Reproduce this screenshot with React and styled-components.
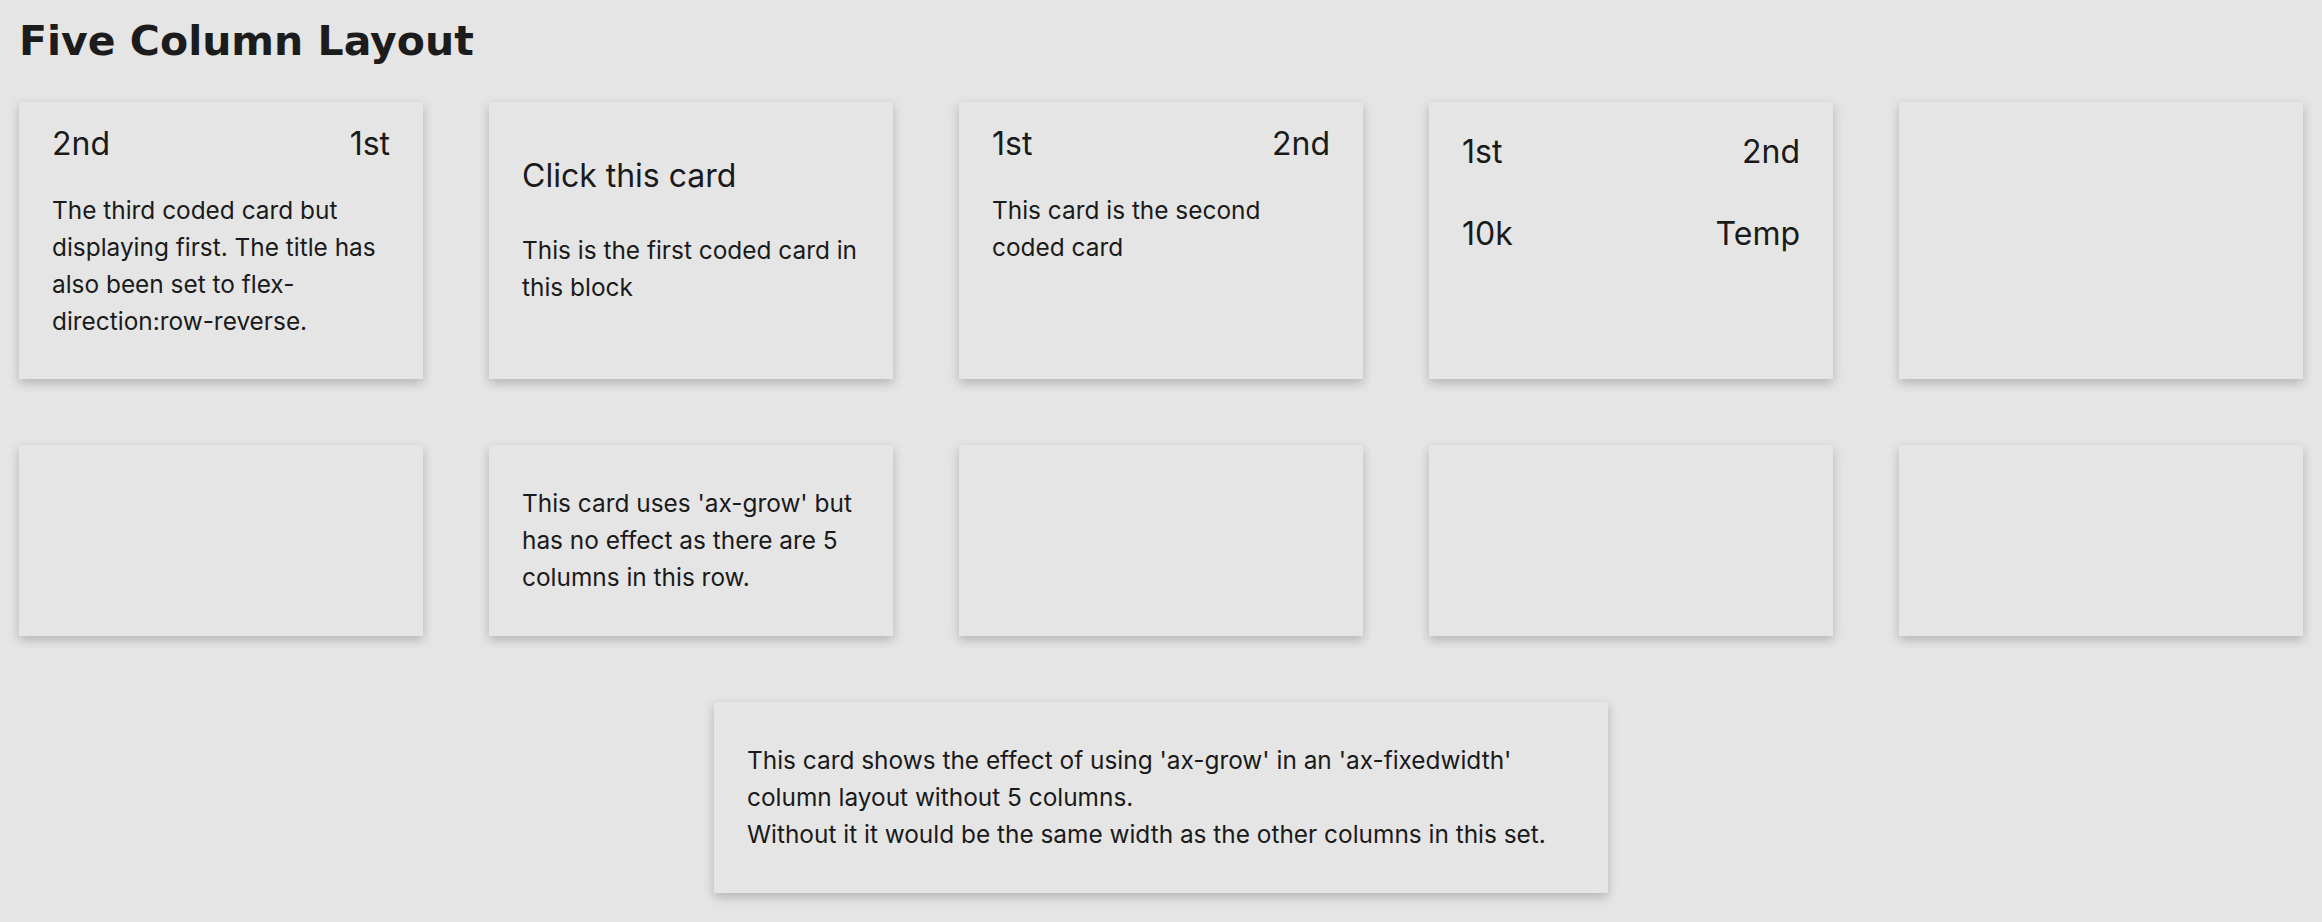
import React from 'react'
import styled, { createGlobalStyle } from 'styled-components'

const GlobalStyle = createGlobalStyle`
    html, body {
        margin: 0;
        padding: 0;
        background: #e5e5e5;
    }

    body {
        font-family: "Inter", "Noto Sans", sans-serif;
        color: #1a1a1a;
    }
`

const App = () => {
  return (
    <>
        <GlobalStyle />
        <Page>
            <Title>Five Column Layout</Title>

            <Row>
                <Card>
                    <CardHeader $reverse>
                        <span>1st</span>
                        <span>2nd</span>
                    </CardHeader>
                    <Text>
                        The third coded card but displaying first. The title has also been set to flex-direction:row-reverse.
                    </Text>
                </Card>

                <Card>
                    <CardTitle>Click this card</CardTitle>
                    <Text>This is the first coded card in this block</Text>
                </Card>

                <Card>
                    <CardHeader>
                        <span>1st</span>
                        <span>2nd</span>
                    </CardHeader>
                    <Text>This card is the second coded card</Text>
                </Card>

                <Card>
                    <StatRow>
                        <span>1st</span>
                        <span>2nd</span>
                    </StatRow>
                    <StatRow $second>
                        <span>10k</span>
                        <span>Temp</span>
                    </StatRow>
                </Card>

                <Card />
            </Row>

            <Row>
                <Card />
                <Card>
                    <Text>This card uses 'ax-grow' but has no effect as there are 5 columns in this row.</Text>
                </Card>
                <Card />
                <Card />
                <Card />
            </Row>

            <Row>
                <Card $grow>
                    <Text>
                        This card shows the effect of using 'ax-grow' in an 'ax-fixedwidth' column layout without 5 columns.
                        <br />
                        Without it it would be the same width as the other columns in this set.
                    </Text>
                </Card>
            </Row>
        </Page>
    </>
  )
}

export default App

const Page = styled.div`
    padding: 17px 19px 30px;
    display: flex;
    flex-direction: column;
    gap: 66px;
`

const Title = styled.h1`
    margin: 0 0 -29px;
    font-family: "DejaVu Sans", sans-serif;
    font-size: 41px;
    line-height: 48px;
    font-weight: 700;
    color: #1c1c1c;
`

const Row = styled.div`
    display: flex;
    justify-content: center;
    gap: 66px;
`

const Card = styled.div`
    flex: ${({ $grow }) => ($grow ? '0 0 894px' : '0 0 404px')};
    box-sizing: border-box;
    min-height: 191px;
    padding: 22px 33px;
    background: #e5e5e5;
    box-shadow: rgba(0, 0, 0, 0.22) 0px 4px 10px 0px;

    display: flex;
    flex-direction: column;
`

const CardHeader = styled.div`
    display: flex;
    flex-direction: ${({ $reverse }) => ($reverse ? 'row-reverse' : 'row')};
    justify-content: space-between;
    margin-bottom: 11px;
    font-size: 32px;
    line-height: 39px;
`

const CardTitle = styled.h2`
    margin: 32px 0 19px;
    font-size: 32px;
    font-weight: 400;
    line-height: 39px;
`

const StatRow = styled.div`
    display: flex;
    justify-content: space-between;
    margin-top: ${({ $second }) => ($second ? '43px' : '8px')};
    font-size: 32px;
    line-height: 39px;
`

const Text = styled.p`
    margin: 18px -4px 17px 0;
    font-size: 24.4px;
    line-height: 37px;
`
